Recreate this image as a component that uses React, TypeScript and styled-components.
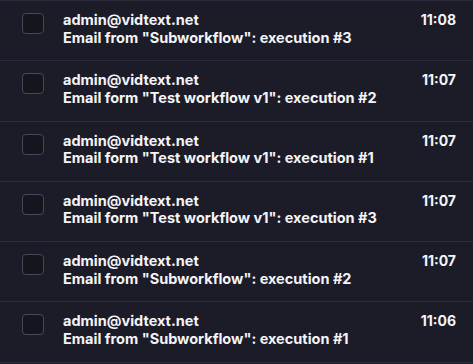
import React from "react";
import styled, { createGlobalStyle } from "styled-components";

const Global = createGlobalStyle`
  html, body { margin: 0; padding: 0; background: #1c1c28; }
  body { font-family: Inter, "Noto Sans", sans-serif; -webkit-font-smoothing: antialiased; }
`;

const List = styled.div`
  width: 473px;
  border-top: 1px solid #2a2a3a;
  background: #1c1c28;
`;

const Row = styled.div`
  box-sizing: border-box;
  height: 60.25px;
  display: flex;
  align-items: flex-start;
  padding: 10px 17px 0 22px;
  border-bottom: 1px solid #2c2c3d;
`;

const Check = styled.div`
  box-sizing: border-box;
  flex: none;
  width: 22px;
  height: 21px;
  margin-top: 2px;
  border: 1px solid #474759;
  border-radius: 4px;
  background: #15151e;
`;

const Body = styled.div`
  flex: 1;
  min-width: 0;
  margin-left: 19px;
  display: flex;
  flex-direction: column;
`;

const Line = styled.div`
  font-size: 14.5px;
  line-height: 17.5px;
  font-weight: 700;
  color: #f4f4f8;
  white-space: nowrap;
`;

const Time = styled.div`
  flex: none;
  font-size: 14px;
  line-height: 17.5px;
  font-weight: 700;
  color: #f4f4f8;
`;

const items = [
  { subject: 'Email from "Subworkflow": execution #3', time: "11:08" },
  { subject: 'Email form "Test workflow v1": execution #2', time: "11:07" },
  { subject: 'Email form "Test workflow v1": execution #1', time: "11:07" },
  { subject: 'Email form "Test workflow v1": execution #3', time: "11:07" },
  { subject: 'Email from "Subworkflow": execution #2', time: "11:07" },
  { subject: 'Email from "Subworkflow": execution #1', time: "11:06" },
];

export default function App() {
  return (
    <>
      <Global />
      <List>
        {items.map((it, i) => (
          <Row key={i}>
            <Check />
            <Body>
              <Line>admin@vidtext.net</Line>
              <Line>{it.subject}</Line>
            </Body>
            <Time>{it.time}</Time>
          </Row>
        ))}
      </List>
    </>
  );
}
